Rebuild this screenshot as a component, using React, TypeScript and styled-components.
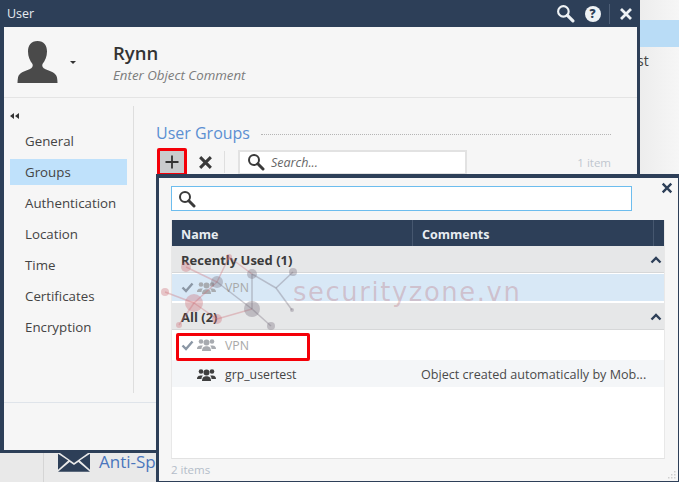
import React from "react";
import styled, { createGlobalStyle } from "styled-components";

const navy = "#2d3f58";
const font = `"Open Sans", "Noto Sans", "Liberation Sans", sans-serif`;

const Global = createGlobalStyle`
  html, body { margin: 0; padding: 0; background: #f5f5f5; }
  * { box-sizing: border-box; }
`;

const Desktop = styled.div`
  position: relative;
  width: 679px;
  height: 482px;
  overflow: hidden;
  font-family: ${font};
  color: #3a3a3a;
  background: linear-gradient(90deg, #e9e9e9 0%, #e9e9e9 92%, #ececec 94%, #f6f6f6 100%);
`;

const Backdrop = styled.div`
  height: 100%;
  display: flex;
  flex-direction: column;
`;

const BackRow = styled.div`
  height: 27px;
  margin-top: 20px;
  background: #b9dcf6;
`;

const BackText = styled.div`
  align-self: flex-end;
  width: 42px;
  margin-top: 5px;
  font-size: 14px;
  line-height: 18px;
  color: #444;
`;

const BackFooter = styled.div`
  margin-top: auto;
  height: 30px;
  margin-left: 43px;
  padding-left: 14px;
  border-left: 1px solid #d5d5d5;
  display: flex;
  align-items: flex-start;
  gap: 9px;
  font-size: 17px;
  line-height: 20px;
  color: #4a76bd;
`;

const MainWindow = styled.section`
  position: absolute;
  left: 0;
  top: 0;
  width: 640px;
  height: 453px;
  display: flex;
  flex-direction: column;
  background: #f6f6f6;
  border: solid ${navy};
  border-width: 0 3px 3px 4px;
`;

const TitleBar = styled.header`
  height: 27px;
  flex: none;
  margin: 0 -3px 0 -4px;
  padding: 0 1px 0 7px;
  background: ${navy};
  display: flex;
  align-items: center;
  color: #e6ebf0;
  font-size: 12.5px;
`;

const TitleText = styled.span`
  flex: 1;
`;

const TitleTool = styled.span`
  width: 27px;
  height: 24px;
  display: flex;
  align-items: center;
  justify-content: center;
`;

const HelpBadge = styled.span`
  width: 16px;
  height: 16px;
  border-radius: 50%;
  background: #eef2f5;
  color: ${navy};
  font-size: 12px;
  line-height: 16px;
  font-weight: 800;
  text-align: center;
`;

const TitleDivider = styled.span`
  width: 1px;
  height: 20px;
  background: #4d5e76;
  margin: 0 2px 0 3px;
`;

const ObjectHeader = styled.div`
  height: 71px;
  flex: none;
  border-bottom: 1px solid #e4e4e4;
  display: flex;
  align-items: center;
  padding: 0 0 0 13px;
`;

const AvatarCaret = styled.span`
  width: 0;
  height: 0;
  margin: 0 37px 0 12px;
  border: 3px solid transparent;
  border-top: 3px solid #333;
  border-bottom: 0;
`;

const ObjectInfo = styled.div`
  display: flex;
  flex-direction: column;
`;

const ObjectName = styled.div`
  font-size: 18.5px;
  line-height: 25px;
  font-weight: 600;
  color: #333;
`;

const ObjectComment = styled.div`
  margin-top: 1px;
  font-size: 13.3px;
  line-height: 18px;
  font-style: italic;
  color: #7c7c7c;
`;

const Body = styled.div`
  flex: 1;
  display: flex;
  min-height: 0;
`;

const Sidebar = styled.nav`
  width: 130px;
  flex: none;
  margin: 8px 0 9px;
  padding: 0 6px 0 6px;
  border-right: 1px solid #dedede;
`;

const Collapse = styled.div`
  height: 22px;
  padding-top: 7px;
  display: flex;
`;

const NavItem = styled.div<{ $active?: boolean }>`
  height: 26px;
  margin-bottom: 5px;
  padding-left: 15px;
  font-size: 13.3px;
  line-height: 26px;
  color: #444;
  background: ${(p) => (p.$active ? "#bfe1fb" : "transparent")};
`;

const Content = styled.div`
  flex: 1;
  padding: 26px 26px 0 22px;
`;

const SectionHead = styled.div`
  display: flex;
  align-items: center;
  gap: 11px;
  height: 18px;
`;

const SectionTitle = styled.h2`
  margin: 0;
  font-size: 16px;
  line-height: 18px;
  font-weight: 400;
  color: #5b8fd2;
`;

const Dots = styled.span`
  flex: 1;
  margin-top: 3px;
  border-top: 1px dotted #b5b5b5;
`;

const Toolbar = styled.div`
  display: flex;
  align-items: center;
  height: 26px;
  margin-top: 7px;
`;

const AddButton = styled.button`
  width: 30px;
  height: 28px;
  margin: 0 0 0 1px;
  padding: 0;
  border: 3px solid #f40008;
  border-radius: 2px;
  background: #c9cbcd;
  display: flex;
  align-items: center;
  justify-content: center;
`;

const IconButton = styled.button`
  width: 37px;
  height: 26px;
  padding: 0;
  border: 0;
  background: none;
  display: flex;
  align-items: center;
  justify-content: center;
`;

const ToolDivider = styled.span`
  width: 1px;
  height: 22px;
  background: #dfdfdf;
`;

const SearchBox = styled.div`
  width: 229px;
  height: 25px;
  margin-left: 13px;
  padding-left: 7px;
  border: 2px solid #e2e2e2;
  background: #fff;
  display: flex;
  align-items: center;
  gap: 6px;
  font-size: 12.5px;
  font-style: italic;
  color: #666;
`;

const ItemCount = styled.span`
  margin-left: auto;
  font-size: 11.5px;
  color: #bfc6cf;
`;

const Footer = styled.div`
  height: 48px;
  flex: none;
  border-top: 1px solid #dfe4ea;
`;

const Popup = styled.section`
  position: absolute;
  left: 156px;
  top: 174px;
  width: 523px;
  height: 308px;
  display: flex;
  flex-direction: column;
  padding: 8px 12px 0 12px;
  background: #f6f6f6;
  border: solid ${navy};
  border-width: 4px 1px 1px 3px;
`;

const PopupClose = styled.span`
  position: absolute;
  right: 5px;
  top: 4px;
  display: flex;
`;

const PopupSearch = styled.div`
  width: 461px;
  height: 25px;
  flex: none;
  padding-left: 6px;
  border: 1px solid #6dbdee;
  background: #fff;
  display: flex;
  align-items: center;
`;

const ListPanel = styled.div`
  width: 494px;
  height: 239px;
  margin-top: 9px;
  flex: none;
  background: #fff;
  border-bottom: 1px solid #e2e2e2;
  border-right: 1px solid #e8e8e8;
  border-left: 1px solid #e8e8e8;
  display: flex;
  flex-direction: column;
`;

const ListHeader = styled.div`
  height: 26px;
  flex: none;
  background: ${navy};
  color: #e8edf2;
  display: grid;
  grid-template-columns: 241px 241px 1fr;
  font-size: 12.5px;
  line-height: 29px;
  font-weight: 700;
`;

const HeaderCell = styled.span`
  padding-left: 9px;
  border-right: 1px solid #46576f;
`;

const GroupRow = styled.div`
  height: 27px;
  flex: none;
  padding: 2px 2px 0 9px;
  background: #e6e7e8;
  border-bottom: 1px solid #d6d7d8;
  display: flex;
  align-items: center;
  justify-content: space-between;
  font-size: 13px;
  font-weight: 700;
  color: #3b3b3b;
`;

const Row = styled.div<{ $tone: "selected" | "plain" | "alt" }>`
  height: ${(p) => (p.$tone === "alt" ? 27 : 30)}px;
  flex: none;
  display: grid;
  grid-template-columns: 249px 1fr;
  align-items: center;
  font-size: 12.3px;
  background: ${(p) =>
    p.$tone === "selected" ? "#d8e8f6" : p.$tone === "alt" ? "#f4f6f8" : "#fff"};
  padding-top: ${(p) => (p.$tone === "alt" ? 2 : 0)}px;
  ${(p) =>
    p.$tone === "selected"
      ? "border-top: 1px solid #fff; border-bottom: 2px solid #fff;"
      : ""}
`;

const NameCell = styled.span<{ $muted?: boolean }>`
  display: flex;
  align-items: center;
  padding-left: 9px;
  color: ${(p) => (p.$muted ? "#a8a8a8" : "#444")};
`;

const CheckSlot = styled.span`
  width: 16px;
  display: flex;
`;

const NameText = styled.span`
  margin-left: 9px;
`;

const CommentCell = styled.span`
  font-size: 12.6px;
  color: #4a4a4a;
  white-space: nowrap;
`;

const Highlight = styled.div`
  position: absolute;
  left: 17px;
  top: 155px;
  width: 134px;
  height: 28px;
  border: 3px solid #f40008;
  border-radius: 2px;
  pointer-events: none;
`;

const PopupFooter = styled.div`
  flex: 1;
  padding-top: 3px;
  font-size: 11.5px;
  line-height: 16px;
  color: #b4bdc9;
`;

const Grip = styled.svg`
  position: absolute;
  right: 1px;
  bottom: 1px;
`;

const Watermark = styled.svg`
  position: absolute;
  left: 0;
  top: 0;
  pointer-events: none;
`;

const WatermarkText = styled.text`
  font-family: "DejaVu Sans", sans-serif;
  font-size: 25.8px;
  letter-spacing: 1.6px;
  fill: rgba(185, 110, 120, 0.32);
`;

function SearchIcon({ color = "#3a3a3a", size = 18 }: { color?: string; size?: number }) {
  return (
    <svg width={size} height={size} viewBox="0 0 18 18" fill="none">
      <circle cx="7" cy="7" r="5" stroke={color} strokeWidth="2" />
      <path d="M10.8 10.8 16 16" stroke={color} strokeWidth="3" strokeLinecap="round" />
    </svg>
  );
}

function CloseIcon({ color = "#333", size = 14, weight = 2.8 }: { color?: string; size?: number; weight?: number }) {
  return (
    <svg width={size} height={size} viewBox="0 0 14 14" fill="none">
      <path d="M2 2 12 12M12 2 2 12" stroke={color} strokeWidth={weight} />
    </svg>
  );
}

function UsersIcon({ color }: { color: string }) {
  return (
    <svg width="19" height="14" viewBox="0 0 19 14" fill={color}>
      <circle cx="4" cy="3.5" r="2.3" />
      <circle cx="15" cy="3.5" r="2.3" />
      <path d="M0 11c0-3 2-3.6 4-3.6.8 0 1.4.1 2 .4-1 .7-1.5 1.7-1.5 3.2z" />
      <path d="M19 11c0-3-2-3.6-4-3.6-.8 0-1.4.1-2 .4 1 .7 1.5 1.7 1.5 3.2z" />
      <circle cx="9.5" cy="4.5" r="3" />
      <path d="M5 13c0-3.800 2-4.800 4.500-4.800S14 9.200 14 13z" />
    </svg>
  );
}

function CheckIcon() {
  return (
    <svg width="13" height="11" viewBox="0 0 13 11" fill="none">
      <path d="M1.500 5.500 5 9 11.500 1.500" stroke="#8b97a5" strokeWidth="2.400" />
    </svg>
  );
}

function Chevron() {
  return (
    <svg width="12" height="8" viewBox="0 0 12 8" fill="none">
      <path d="M1.500 6.500 6 2 10.500 6.500" stroke="#2d3f58" strokeWidth="2.400" />
    </svg>
  );
}

function Avatar() {
  return (
    <svg width="41" height="44" viewBox="0 0 41 44" fill="#4a4a4a">
      <path d="M20.500 1c6.500 0 9.500 4.500 9.500 10.500 0 5-2 9.500-4.500 12.500-.8 2 .2 4 3 5.200 5 2.200 10.500 3.300 11.500 8.300.3 2 .5 3.500.5 5.500H.5c0-2 .2-3.500.5-5.500 1-5 6.500-6.100 11.500-8.300 2.800-1.200 3.800-3.200 3-5.200C13 21 11 16.500 11 11.500 11 5.500 14 1 20.500 1z" />
    </svg>
  );
}

function Envelope() {
  return (
    <svg width="32" height="20" viewBox="0 0 33 20">
      <path d="M1 0h31L16.500 11z" fill="#2d3f58" />
      <path d="M0 1.500v16.500l10.500-9.500zM33 1.500v16.500L22.500 8.500zM0 20h33L21 10l-4.500 3.200L12 10z" fill="#2d3f58" />
    </svg>
  );
}

function CollapseArrows() {
  return (
    <svg width="9" height="6" viewBox="0 0 9 6" fill="#333">
      <path d="M4 0v6L0 3zM9 0v6L5 3z" />
    </svg>
  );
}

const pink = "rgba(205,110,120,0.36)";
const grey = "rgba(120,110,125,0.36)";

const nodes: [number, number, number, string][] = [
  [186, 267, 5, pink],
  [229, 257, 3, pink],
  [217, 282, 6, grey],
  [194, 303, 9, pink],
  [165, 292, 4, pink],
  [217, 319, 5, pink],
  [179, 325, 3, pink],
  [252, 309, 8, grey],
  [271, 326, 4, grey],
  [252, 274, 5, grey],
  [293, 272, 4, grey],
  [292, 310, 2, grey],
];

const edges: [number, number, number, number, string][] = [
  [186, 267, 217, 282, pink],
  [229, 257, 217, 282, pink],
  [217, 282, 252, 309, grey],
  [165, 292, 194, 303, pink],
  [194, 303, 217, 282, pink],
  [194, 303, 217, 319, pink],
  [179, 325, 194, 303, pink],
  [217, 319, 252, 309, pink],
  [252, 309, 271, 326, grey],
  [252, 309, 252, 274, grey],
  [229, 257, 252, 274, pink],
  [252, 274, 276, 288, grey],
  [276, 288, 293, 272, grey],
  [276, 288, 292, 310, grey],
];

export default function App() {
  return (
    <Desktop>
      <Global />
      <Backdrop>
        <BackRow />
        <BackText>st</BackText>
        <BackFooter>
          <Envelope />
          <span>Anti-Sp</span>
        </BackFooter>
      </Backdrop>

      <MainWindow>
        <TitleBar>
          <TitleText>User</TitleText>
          <TitleTool>
            <SearchIcon color="#eef2f5" size={19} />
          </TitleTool>
          <TitleTool>
            <HelpBadge>?</HelpBadge>
          </TitleTool>
          <TitleDivider />
          <TitleTool>
            <CloseIcon color="#eef2f5" />
          </TitleTool>
        </TitleBar>
        <ObjectHeader>
          <Avatar />
          <AvatarCaret />
          <ObjectInfo>
            <ObjectName>Rynn</ObjectName>
            <ObjectComment>Enter Object Comment</ObjectComment>
          </ObjectInfo>
        </ObjectHeader>
        <Body>
          <Sidebar>
            <Collapse>
              <CollapseArrows />
            </Collapse>
            <NavItem>General</NavItem>
            <NavItem $active>Groups</NavItem>
            <NavItem>Authentication</NavItem>
            <NavItem>Location</NavItem>
            <NavItem>Time</NavItem>
            <NavItem>Certificates</NavItem>
            <NavItem>Encryption</NavItem>
          </Sidebar>
          <Content>
            <SectionHead>
              <SectionTitle>User Groups</SectionTitle>
              <Dots />
            </SectionHead>
            <Toolbar>
              <AddButton aria-label="Add">
                <svg width="16" height="16" viewBox="0 0 16 16" fill="none">
                  <path d="M8 1.500v13M1.500 8h13" stroke="#333" strokeWidth="1.800" />
                </svg>
              </AddButton>
              <IconButton aria-label="Remove">
                <CloseIcon size={15} color="#3a3a3a" />
              </IconButton>
              <ToolDivider />
              <SearchBox>
                <SearchIcon />
                <span>Search...</span>
              </SearchBox>
              <ItemCount>1 item</ItemCount>
            </Toolbar>
          </Content>
        </Body>
        <Footer />
      </MainWindow>

      <Popup>
        <PopupClose>
          <CloseIcon size={12} color="#2d3f58" />
        </PopupClose>
        <PopupSearch>
          <SearchIcon />
        </PopupSearch>
        <ListPanel>
          <ListHeader>
            <HeaderCell>Name</HeaderCell>
            <HeaderCell>Comments</HeaderCell>
          </ListHeader>
          <GroupRow>
            Recently Used (1)
            <Chevron />
          </GroupRow>
          <Row $tone="selected">
            <NameCell $muted>
              <CheckSlot><CheckIcon /></CheckSlot>
              <UsersIcon color="#a8abb0" />
              <NameText>VPN</NameText>
            </NameCell>
          </Row>
          <GroupRow>
            All (2)
            <Chevron />
          </GroupRow>
          <Row $tone="plain">
            <NameCell $muted>
              <CheckSlot><CheckIcon /></CheckSlot>
              <UsersIcon color="#a8abb0" />
              <NameText>VPN</NameText>
            </NameCell>
          </Row>
          <Row $tone="alt">
            <NameCell>
              <CheckSlot />
              <UsersIcon color="#3f3f3f" />
              <NameText>grp_usertest</NameText>
            </NameCell>
            <CommentCell>Object created automatically by Mob...</CommentCell>
          </Row>
        </ListPanel>
        <PopupFooter>2 items</PopupFooter>
        <Highlight />
        <Grip width="10" height="10" viewBox="0 0 10 10" fill="#cfcfcf">
          <rect x="7" y="1" width="1.500" height="1.500" />
          <rect x="4" y="4" width="1.500" height="1.500" />
          <rect x="7" y="4" width="1.500" height="1.500" />
          <rect x="1" y="7" width="1.500" height="1.500" />
          <rect x="4" y="7" width="1.500" height="1.500" />
          <rect x="7" y="7" width="1.500" height="1.500" />
        </Grip>
      </Popup>

      <Watermark width="679" height="482" viewBox="0 0 679 482">
        {edges.map(([x1, y1, x2, y2, c], i) => (
          <line key={i} x1={x1} y1={y1} x2={x2} y2={y2} stroke={c} strokeWidth="1.500" />
        ))}
        {nodes.map(([cx, cy, r, c], i) => (
          <circle key={i} cx={cx} cy={cy} r={r} fill={c} />
        ))}
        <WatermarkText x="293" y="301">securityzone.vn</WatermarkText>
      </Watermark>
    </Desktop>
  );
}
